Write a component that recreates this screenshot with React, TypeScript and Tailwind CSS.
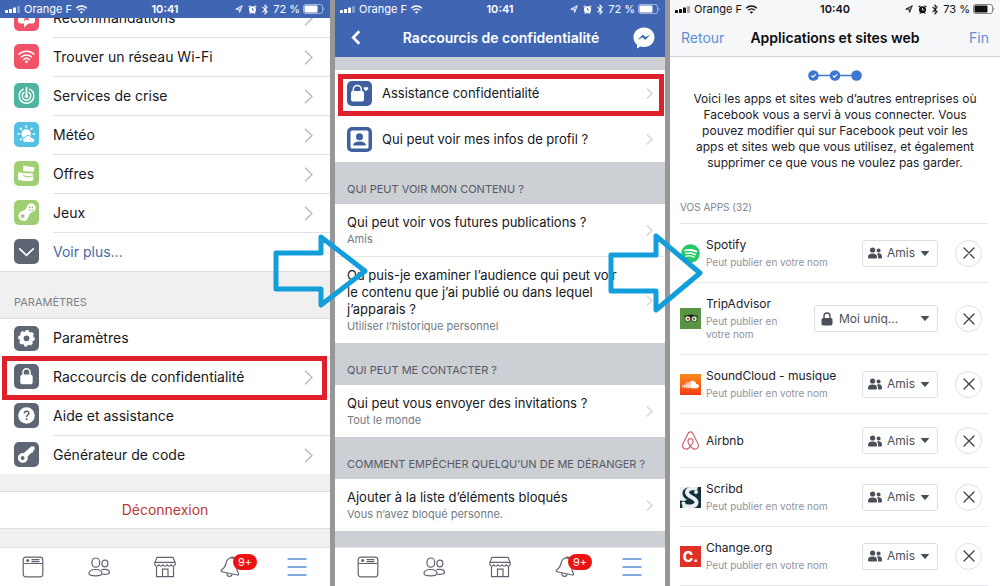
import type { ReactNode } from 'react';
import clsx from 'clsx';
import { FaAirbnb, FaBluetoothB, FaSoundcloud, FaSpotify } from 'react-icons/fa';

type MenuEntry = {
  label: string;
  color: string;
  icon: ReactNode;
  chevron?: boolean;
  link?: boolean;
  highlight?: boolean;
};

type AppEntry = {
  name: string;
  note?: string;
  logo: ReactNode;
  audience?: 'friends' | 'me';
};

/* ---------- Small drawings ---------- */

function Chevron({ small = false }: { small?: boolean }) {
  return (
    <svg
      viewBox="0 0 9 15"
      fill="none"
      stroke="currentColor"
      strokeWidth="1.4"
      className={clsx('shrink-0', small ? 'h-[11px] w-[7px] text-[#c4c6ca]' : 'h-[15px] w-[9px] text-[#b9bbc0]')}
    >
      <path d="M1 .8 8 7.5 1 14.2" />
    </svg>
  );
}

function WifiGlyph({ className }: { className: string }) {
  return (
    <svg viewBox="0 0 24 18" fill="none" stroke="currentColor" strokeWidth="3" className={className}>
      <path d="M1.5 6.5a15 15 0 0 1 21 0" />
      <path d="M5.5 10.6a9.4 9.4 0 0 1 13 0" />
      <path d="M12 17.5 8.8 14a4.6 4.6 0 0 1 6.4 0z" fill="currentColor" stroke="none" />
    </svg>
  );
}

function Arrow({ className, height }: { className: string; height: number }) {
  const mid = height / 2;
  return (
    <svg
      width="96"
      height={height}
      viewBox={`0 0 96 ${height}`}
      fill="none"
      stroke="#129ddb"
      strokeWidth="5"
      strokeLinejoin="round"
      className={clsx('pointer-events-none absolute z-20', className)}
    >
      <path d={`M3 ${mid - 18}H48V3L92 ${mid} 48 ${height - 3}V${mid + 18}H3Z`} />
    </svg>
  );
}

const Friends = ({ className }: { className: string }) => (
  <svg viewBox="0 0 14 12" fill="currentColor" className={className}>
    <circle cx="4.6" cy="3" r="2.6" />
    <circle cx="10.6" cy="3.4" r="2" />
    <path d="M0 10c0-2.500 1.700-3.600 4.600-3.600S9 7.500 9 10c0 1-.6 1.500-1.500 1.500h-6C.6 11.500 0 11 0 10z" />
    <path d="M10 11.500c.4-1.800 0-3.700-1-4.800.5-.3 1-.4 1.700-.4 2.200 0 3.300 1.300 3.300 3.600 0 1-.4 1.600-1.400 1.600z" />
  </svg>
);

const Lock = ({ className }: { className: string }) => (
  <svg viewBox="0 0 12 14" className={className}>
    <path d="M3 7V4a3 3 0 0 1 6 0v3" fill="none" stroke="currentColor" strokeWidth="1.4" />
    <rect x=".5" y="6" width="11" height="7.500" rx="1.800" fill="currentColor" />
  </svg>
);

/* ---------- Menu icons, drawn on a 25 x 25 tile ---------- */

const Tile = ({ children }: { children: ReactNode }) => (
  <svg viewBox="0 0 25 25" fill="#fff" className="size-[25px]">
    {children}
  </svg>
);

const starIcon = (
  <Tile>
    <path d="M4 8a3 3 0 0 1 3-3h11a3 3 0 0 1 3 3v6.500a3 3 0 0 1-3 3h-3.500L10 21.500v-4H7a3 3 0 0 1-3-3z" />
    <path d="m12.500 7.500 1.200 2.600 2.800.3-2.100 1.900.6 2.700-2.500-1.400-2.500 1.400.6-2.700-2.100-1.900 2.800-.3z" fill="#f25268" />
  </Tile>
);

const wifiIcon = (
  <Tile>
    <g fill="none" stroke="#fff" strokeWidth="1.500" strokeLinecap="round">
      <path d="M5 10.300a10.800 10.800 0 0 1 15 0" />
      <path d="M7.500 12.900a7.200 7.200 0 0 1 10 0" />
      <path d="M9.900 15.400a3.800 3.800 0 0 1 5.200 0" />
    </g>
    <circle cx="12.500" cy="17.800" r="1.300" />
  </Tile>
);

const crisisIcon = (
  <Tile>
    <g fill="none" stroke="#fff" strokeWidth="1.400" strokeLinecap="round">
      <path d="M9.300 6.200a7.400 7.400 0 1 0 6.400 0" />
      <path d="M10 9.400a4.300 4.300 0 1 0 5 0" />
      <path d="M12.500 4.800v7" strokeWidth="1.800" />
    </g>
    <circle cx="12.500" cy="13.200" r="1.800" />
  </Tile>
);

const weatherIcon = (
  <Tile>
    <circle cx="12.200" cy="12" r="4.800" />
    <g stroke="#fff" strokeWidth="1.700" strokeLinecap="round">
      <path d="M12.200 4v1M6.500 6.400l.7.700M4.200 12h1M6.500 17.700l.7-.7M17.900 6.400l-.7.700M20.300 12h-1M12.200 20v-.5" />
    </g>
    <path
      d="M11 20.500a2.500 2.500 0 0 1 0-5 3.600 3.600 0 0 1 6.700.4 2.400 2.400 0 0 1 1.300 4.600z"
      stroke="#54c0e2"
      strokeWidth="1"
    />
  </Tile>
);

const offersIcon = (
  <Tile>
    <path d="m9.500 4.500 11 2-.8 4.300-10.700-.6z" />
    <path d="M4 11.500h3.500l1 .8h8.800a2 2 0 0 1 2 2V18a2 2 0 0 1-2 2H8.500L7 19H4z" />
    <path d="M9 14.500c2 0 2.500 1.500 4.500 1.500s3-1.200 5.500-1" fill="none" stroke="#a0cf73" strokeWidth="1.100" />
  </Tile>
);

const gamesIcon = (
  <Tile>
    <path d="M14.500 4.600a4.300 4.300 0 0 1 6.200 5.900c-1 1.300-2.700 1.500-4 2.400-1.500 1-1.800 2.600-2.500 4.600A5 5 0 1 1 7 11.600c2-.8 3.600-1 4.800-2.600.9-1.300 1.400-3.200 2.700-4.400z" />
    <path d="m7 14.500 3.400 3.400M10.400 14.500 7 17.900" stroke="#8bbd5c" strokeWidth="1.100" />
    <g fill="#8bbd5c">
      <circle cx="15.700" cy="7.400" r=".8" />
      <circle cx="18.300" cy="7.400" r=".8" />
      <circle cx="15.700" cy="10" r=".8" />
      <circle cx="18.300" cy="10" r=".8" />
    </g>
  </Tile>
);

const moreIcon = (
  <Tile>
    <path d="m5.800 9.800 6.700 6.600 6.700-6.600" fill="none" stroke="#fff" strokeWidth="1.700" strokeLinecap="round" />
  </Tile>
);

const gearIcon = (
  <Tile>
    <circle cx="12.500" cy="12.300" r="5" fill="none" stroke="#fff" strokeWidth="4.200" />
    <circle
      cx="12.500"
      cy="12.300"
      r="7.300"
      fill="none"
      stroke="#fff"
      strokeWidth="2"
      strokeDasharray="3.300 2.433"
      strokeDashoffset="1"
    />
  </Tile>
);

const lockIcon = (
  <Tile>
    <path d="M9 11.500V8.300a3.500 3.500 0 0 1 7 0v3.200" fill="none" stroke="#fff" strokeWidth="1.500" />
    <rect x="6.300" y="10.500" width="12.400" height="9.800" rx="2.600" />
  </Tile>
);

const helpIcon = (
  <Tile>
    <circle cx="12.500" cy="12.500" r="8.300" />
    <path
      d="M10.300 10.400c.1-1.400 1-2.100 2.300-2.100 1.300 0 2.200.8 2.200 2 0 1.700-2.200 1.800-2.200 3.700"
      fill="none"
      stroke="#555c69"
      strokeWidth="1.500"
    />
    <circle cx="12.600" cy="16.300" r="1" fill="#555c69" />
  </Tile>
);

const keyIcon = (
  <Tile>
    <path d="M17.200 4.400h3.300v3.500l-1.300.9-.4 1.600-1.700.6-3.500 3.600a4.900 4.900 0 1 1-3.700-3.500z" strokeLinejoin="round" />
    <circle cx="8.600" cy="16" r="1.900" fill="#5f6673" />
  </Tile>
);

const privacyIcon = (
  <Tile>
    <path d="M6.300 11V8.400a4 4 0 0 1 8 0V11" fill="none" stroke="#fff" strokeWidth="1.500" />
    <rect x="4" y="10" width="13" height="10.500" rx="1.800" />
    <path d="m19 10.200-2.100-2.100c-1.100-1.300.9-2.900 2.100-1.400 1.200-1.500 3.200.1 2.100 1.400z" />
  </Tile>
);

const profileIcon = (
  <Tile>
    <rect x="3.500" y="3.500" width="18" height="18" rx="1.500" />
    <circle cx="12.500" cy="9.800" r="3.500" fill="#3f5f9e" />
    <path d="M6 18.500c.4-3 3-4 6.500-4s6.100 1 6.500 4z" fill="#3f5f9e" />
  </Tile>
);

/* ---------- Status and tab bars ---------- */

function StatusBar({ time, battery, level, dark = false }: { time: string; battery: string; level: number; dark?: boolean }) {
  return (
    <div
      className={clsx(
        'grid h-[18px] shrink-0 grid-cols-[1fr_auto_1fr] items-center px-[5px] text-[11px] leading-[18px]',
        dark ? 'bg-[#f6f7f9] text-[#111]' : 'bg-[#4066b3] text-white',
      )}
    >
      <div className="flex items-center">
        <svg viewBox="0 0 15 7" fill="currentColor" className="h-[7px] w-[15px]">
          <rect y="4" width="3" height="3" rx=".6" />
          <rect x="4" y="3" width="3" height="4" rx=".6" />
          <rect x="8" y="1.500" width="3" height="5.500" rx=".6" />
          <rect x="12" width="3" height="7" rx=".6" opacity=".35" />
        </svg>
        <span className="ml-1">Orange F</span>
        <WifiGlyph className="ml-[3px] h-[9px] w-[13px]" />
      </div>
      <span className="text-[11px] font-semibold">{time}</span>
      <div className="flex items-center justify-end">
        <svg viewBox="0 0 8 8" fill="none" stroke="currentColor" className="size-[8px]">
          <path d="M.8 4.200 7.300.7 4.600 7.400 4 4.200z" strokeWidth=".9" fill="currentColor" fillOpacity=".35" />
        </svg>
        <svg viewBox="0 0 10 10" className="ml-[5px] size-[9px]">
          <circle cx="5" cy="5.400" r="3.900" fill="currentColor" />
          <path d="M.8 2.400 2.600.9M9.200 2.400 7.400.9M2 9.500l.8-.8M8 9.500l-.8-.8" stroke="currentColor" strokeWidth="1.300" />
          <path d="M5 3.200v2.400h1.900" fill="none" stroke={dark ? '#f6f7f9' : '#4066b3'} />
        </svg>
        <FaBluetoothB className="ml-1 h-[11px] w-[8px]" />
        <span className="ml-1">{battery}</span>
        <svg viewBox="0 0 22 10" className="ml-[3px] h-[10px] w-[22px]">
          <rect x=".5" y=".5" width="19" height="9" rx="2" fill="none" stroke="currentColor" opacity=".5" />
          <rect x="1.500" y="1.500" width={level} height="7" rx="1" fill="currentColor" />
          <path d="M20.500 3.500c1.300.5 1.300 2.500 0 3z" fill="currentColor" opacity=".5" />
        </svg>
      </div>
    </div>
  );
}

function TabBar() {
  const tab = 'flex items-center justify-center';
  const glyph = 'size-[22px]';
  return (
    <nav className="mt-auto grid h-[39px] shrink-0 grid-cols-5 border-t border-[#e2e3e6] bg-white text-[#5f6470]">
      <button type="button" aria-label="Fil" className={tab}>
        <svg viewBox="0 0 22 22" fill="none" stroke="currentColor" strokeWidth="1.200" className={glyph}>
          <rect x="1.200" y="1.200" width="19.600" height="19.600" rx="2.500" />
          <path d="M1.200 7.500h19.600M9.500 3.600h8M9.500 5.600h8" />
          <circle cx="5.700" cy="4.600" r="1.500" fill="currentColor" stroke="none" />
        </svg>
      </button>
      <button type="button" aria-label="Amis" className={tab}>
        <svg viewBox="0 0 22 22" fill="none" stroke="currentColor" strokeWidth="1.200" className={glyph}>
          <rect x="4" y="2" width="7.600" height="9.200" rx="3.700" />
          <rect x="14" y="4.200" width="5.800" height="6.600" rx="2.800" />
          <path d="M1 17.500c0-2.800 2.800-4 6.700-4s6.300 1.200 6.300 4c0 1.700-2.400 2.300-6.500 2.300S1 19.200 1 17.500z" />
          <path d="M13.500 13.600c4.500-.9 8 .2 8 2.700 0 1.500-2.500 2.300-7 2" />
        </svg>
      </button>
      <button type="button" aria-label="Marketplace" className={tab}>
        <svg viewBox="0 0 22 22" fill="none" stroke="currentColor" strokeWidth="1.200" className={glyph}>
          <path d="M3 1.300h16l2.200 5.200v2.300c-1.200 1.900-2.900 1.900-4 0-1.200 1.900-2.900 1.900-4.100 0-1.200 1.900-3 1.900-4.200 0-1.200 1.900-2.900 1.900-4.100 0-1.100 1.900-2.800 1.900-4 0V6.500zM.8 6.300h20.400" />
          <path d="M2.500 10.500v10.200h17V10.500M8.500 20.500v-7.300h5.500v7.300" />
        </svg>
      </button>
      <button type="button" aria-label="Notifications" className={clsx(tab, 'relative')}>
        <svg viewBox="0 0 22 22" fill="none" stroke="currentColor" strokeWidth="1.200" className={glyph}>
          <g transform="rotate(12 11 11)">
            <path d="M11 2c-4 0-5.600 3-5.600 6.500 0 4-1.400 5.700-3 7.300-.6.700-.3 1.700.7 1.700h15.800c1 0 1.300-1 .7-1.700-1.600-1.600-3-3.300-3-7.300C16.600 5 15 2 11 2z" />
            <path d="M9 2.300c0-1.800 4-1.800 4 0M8.300 17.800c.3 3.600 5.100 3.600 5.400 0" />
          </g>
        </svg>
        <span className="absolute top-[6px] left-[35px] rounded-full bg-[#ee1111] px-[5px] text-[11px] leading-[16px] text-white">9+</span>
      </button>
      <button type="button" aria-label="Menu" className={tab}>
        <svg viewBox="0 0 22 22" stroke="#5b8fd6" strokeWidth="1.600" className={glyph}>
          <path d="M1.500 3h19M1.500 11h19M1.500 19h19" />
        </svg>
      </button>
    </nav>
  );
}

/* ---------- Panel 1: main menu ---------- */

const shortcuts: MenuEntry[] = [
  { label: 'Recommandations', color: 'bg-[#f25268]', icon: starIcon, chevron: true },
  { label: 'Trouver un réseau Wi-Fi', color: 'bg-[#f25268]', icon: wifiIcon, chevron: true },
  { label: 'Services de crise', color: 'bg-[#4fb5a0]', icon: crisisIcon, chevron: true },
  { label: 'Météo', color: 'bg-[#54c0e2]', icon: weatherIcon, chevron: true },
  { label: 'Offres', color: 'bg-[#a0cf73]', icon: offersIcon, chevron: true },
  { label: 'Jeux', color: 'bg-[#a0cf73]', icon: gamesIcon, chevron: true },
  { label: 'Voir plus...', color: 'bg-[#5f6673]', icon: moreIcon, link: true },
];

const settings: MenuEntry[] = [
  { label: 'Paramètres', color: 'bg-[#5f6673]', icon: gearIcon },
  { label: 'Raccourcis de confidentialité', color: 'bg-[#5f6673]', icon: lockIcon, chevron: true, highlight: true },
  { label: 'Aide et assistance', color: 'bg-[#5f6673]', icon: helpIcon },
  { label: 'Générateur de code', color: 'bg-[#5f6673]', icon: keyIcon, chevron: true },
];

function MenuList({ items, className }: { items: MenuEntry[]; className?: string }) {
  return (
    <ul className={clsx('bg-white', className)}>
      {items.map((item) => (
        <li key={item.label} className="group relative">
          <a href="#" className="flex items-center gap-[14px] pl-[14px]">
            <span className={clsx('shrink-0 overflow-hidden rounded-[5px]', item.color)}>{item.icon}</span>
            <span className="flex flex-1 items-center justify-between border-t border-[#dfe0e3] py-[10px] pr-[17px] group-first:border-t-0">
              <span className={clsx('text-[14px] leading-[18px]', item.link ? 'text-[#4a69a5]' : 'text-[#16181d]')}>
                {item.label}
              </span>
              {item.chevron && <Chevron />}
            </span>
          </a>
          {item.highlight && (
            <span className="pointer-events-none absolute -top-px right-[3px] -bottom-1 left-[2px] z-10 border-[5px] border-[#df1f29]" />
          )}
        </li>
      ))}
    </ul>
  );
}

function MenuPanel() {
  return (
    <section className="relative flex flex-col bg-[#f0f0f1]">
      <StatusBar time="10:41" battery="72 %" level={13} />
      {/* the list is scrolled: its first row is cut by the status bar */}
      <div className="overflow-hidden">
        <MenuList items={shortcuts} className="-mt-[19px]" />
      </div>
      <h2 className="border-y border-[#dcdde0] pt-[22px] pb-2 pl-[14px] text-[11px] leading-[16px] text-[#7d8088]">PARAMÈTRES</h2>
      <MenuList items={settings} />
      <div className="mt-[17px] border-y border-[#dcdde0] bg-white">
        <button type="button" className="w-full py-[9px] text-[14px] leading-[18px] text-[#b9373a]">
          Déconnexion
        </button>
      </div>
      <TabBar />
      <Arrow height={74} className="top-[234px] -right-[39px]" />
    </section>
  );
}

/* ---------- Panel 2: privacy shortcuts ---------- */

function GroupTitle({ children }: { children: ReactNode }) {
  return <h2 className="bg-[#cccfd4] pt-[19px] pb-[7px] pl-3 text-[11px] leading-[16px] text-[#555a63]">{children}</h2>;
}

function PrivacyRow({ title, note, divider = false }: { title: ReactNode; note: string; divider?: boolean }) {
  return (
    <a
      href="#"
      className={clsx('flex items-center justify-between bg-white pt-[10px] pr-3 pb-[9px] pl-3', divider && 'border-b border-[#e4e5e8]')}
    >
      <span>
        <span className="block text-[13px] leading-[17px] whitespace-nowrap text-[#16181d]">{title}</span>
        <span className="block text-[11px] leading-[16px] text-[#757982]">{note}</span>
      </span>
      <Chevron small />
    </a>
  );
}

function IconRow({ label, icon, highlight = false }: { label: string; icon: ReactNode; highlight?: boolean }) {
  return (
    <a href="#" className="relative flex h-[46px] items-center gap-[10px] bg-white px-3">
      <span className="overflow-hidden rounded-[5px] bg-[#3f5f9e]">{icon}</span>
      <span className="flex-1 text-[13px] leading-[17px] text-[#16181d]">{label}</span>
      <Chevron small />
      {highlight && (
        <span className="pointer-events-none absolute top-1 right-px bottom-0 left-[3px] z-10 border-[5px] border-[#df1f29]" />
      )}
    </a>
  );
}

function PrivacyPanel() {
  return (
    <section className="relative flex flex-col bg-[#cccfd4]">
      <StatusBar time="10:41" battery="72 %" level={13} />
      <header className="flex h-[39px] shrink-0 items-center justify-between bg-[#4066b3] pr-[10px] pl-4 text-white">
        <button type="button" aria-label="Retour">
          <svg viewBox="0 0 10 16" fill="none" stroke="currentColor" strokeWidth="2.800" className="h-[15px] w-[10px]">
            <path d="M8.500 1.300 2 8l6.500 6.700" />
          </svg>
        </button>
        <h1 className="pl-2 text-[14px] font-semibold">Raccourcis de confidentialité</h1>
        <button type="button" aria-label="Messenger">
          <svg viewBox="0 0 22 22" className="size-[22px]">
            <path d="M11 .5C5 .5.5 4.800.5 10.300c0 3 1.400 5.600 3.500 7.400v3.800l3.400-1.900c1.100.3 2.300.5 3.600.5 6 0 10.500-4.300 10.500-9.800S17 .5 11 .5z" fill="#fff" />
            <path d="m4.500 13 5.300-5.600 2.700 2.700 5-2.700-5.300 5.600-2.700-2.700z" fill="#4066b3" />
          </svg>
        </button>
      </header>
      <div className="pt-[13px]">
        <IconRow label="Assistance confidentialité" icon={privacyIcon} highlight />
        <IconRow label="Qui peut voir mes infos de profil ?" icon={profileIcon} />
      </div>
      <GroupTitle>QUI PEUT VOIR MON CONTENU ?</GroupTitle>
      <PrivacyRow title="Qui peut voir vos futures publications ?" note="Amis" divider />
      <PrivacyRow
        title={
          <>
            Où puis-je examiner l’audience qui peut voir
            <br />
            le contenu que j’ai publié ou dans lequel
            <br />
            j’apparais ?
          </>
        }
        note="Utiliser l’historique personnel"
      />
      <GroupTitle>QUI PEUT ME CONTACTER ?</GroupTitle>
      <PrivacyRow title="Qui peut vous envoyer des invitations ?" note="Tout le monde" />
      <GroupTitle>COMMENT EMPÊCHER QUELQU’UN DE ME DÉRANGER ?</GroupTitle>
      <PrivacyRow title="Ajouter à la liste d’éléments bloqués" note="Vous n’avez bloqué personne." />
      <TabBar />
      <Arrow height={80} className="top-[233px] -right-[39px]" />
    </section>
  );
}

/* ---------- Panel 3: apps and websites ---------- */

const apps: AppEntry[] = [
  {
    name: 'Spotify',
    note: 'Peut publier en votre nom',
    logo: <FaSpotify className="size-[19px] text-[#25c865]" />,
  },
  {
    name: 'TripAdvisor',
    note: 'Peut publier en votre nom',
    logo: (
      <span className="flex size-full items-center justify-center bg-[#589442]">
        <svg viewBox="0 0 14 9" className="h-[9px] w-[14px]">
          <path d="M0 1.500h3C5 0 9 0 11 1.500h3L12.500 4h-11z" fill="#1c2a17" />
          <circle cx="3.700" cy="4.800" r="2.900" fill="#f4f1e0" stroke="#1c2a17" strokeWidth=".8" />
          <circle cx="10.300" cy="4.800" r="2.900" fill="#f4f1e0" stroke="#1c2a17" strokeWidth=".8" />
          <circle cx="3.900" cy="4.800" r="1.100" fill="#a33" />
          <circle cx="10.100" cy="4.800" r="1.100" fill="#274" />
        </svg>
      </span>
    ),
    audience: 'me',
  },
  {
    name: 'SoundCloud - musique',
    note: 'Peut publier en votre nom',
    logo: (
      <span className="flex size-full items-center justify-center bg-linear-to-b from-[#fb8a1c] to-[#f43a14]">
        <FaSoundcloud className="size-[17px] text-white" />
      </span>
    ),
  },
  { name: 'Airbnb', logo: <FaAirbnb className="size-[21px] text-[#cf6472]" /> },
  {
    name: 'Scribd',
    note: 'Peut publier en votre nom',
    logo: (
      <svg viewBox="0 0 21 21" className="size-[21px]">
        <rect width="21" height="21" fill="#14303a" />
        <path d="M0 0h11C5 .5 2.500 3 2.500 6.500c0 3 2 4.700 4.500 6.200L4 14 0 13.500z" fill="#e9eef0" />
        <path d="M17.500 1.500C12 .3 7 2 7 5.500c0 4.500 9.500 5 9.500 9.700 0 4.500-7 5.300-14 3.300" fill="none" stroke="#e9eef0" strokeWidth="4" />
        <circle cx="16" cy="5" r="2" fill="#e9eef0" />
        <circle cx="3.500" cy="16.500" r="2" fill="#e9eef0" />
      </svg>
    ),
  },
  {
    name: 'Change.org',
    note: 'Peut publier en votre nom',
    logo: <span className="size-full bg-[#e03129] text-center text-[14px] leading-[21px] font-extrabold text-white">C.</span>,
  },
];

function AudienceSelect({ app, audience = 'friends' }: { app: string; audience?: 'friends' | 'me' }) {
  const onlyMe = audience === 'me';
  return (
    <label
      className={clsx(
        'flex h-[27px] shrink-0 items-center rounded-[3px] border border-[#dcdee2] bg-white pr-2 pl-[5px] text-[#4b4f58]',
        onlyMe ? 'w-[124px]' : 'w-[76px]',
      )}
    >
      {onlyMe ? <Lock className="mx-px h-[14px] w-[12px] shrink-0" /> : <Friends className="h-[12px] w-[14px] shrink-0" />}
      <select
        aria-label={`Audience de ${app}`}
        defaultValue={audience}
        className="ml-[5px] min-w-0 flex-1 appearance-none bg-transparent text-[12px] leading-[16px] outline-none"
      >
        <option value="friends">Amis</option>
        <option value="me">Moi uniq...</option>
      </select>
      <svg viewBox="0 0 8 5" fill="currentColor" className="h-[5px] w-[8px] shrink-0">
        <path d="M.5 0h7c.5 0 .6.400.3.700L4.600 4.500c-.3.300-.9.300-1.200 0L.2.700C-.1.400 0 0 .5 0z" />
      </svg>
    </label>
  );
}

function AppRow({ app }: { app: AppEntry }) {
  return (
    <li className="flex items-center border-b border-[#e6e7ea] py-[13px] pr-[6px]">
      <span className="flex size-[21px] shrink-0 items-center justify-center">{app.logo}</span>
      <div className="min-w-0 flex-1 pr-4 pl-[5px]">
        <h3 className="text-[12px] leading-[16px] whitespace-nowrap text-[#1d2129]">{app.name}</h3>
        {app.note && <p className="mt-[3px] text-[10px] leading-[13px] text-[#8f939c]">{app.note}</p>}
      </div>
      <AudienceSelect app={app.name} audience={app.audience} />
      <button
        type="button"
        aria-label={`Supprimer ${app.name}`}
        className="ml-[17px] flex size-[27px] shrink-0 items-center justify-center rounded-full border border-[#dcdee2] text-[#3c4048]"
      >
        <svg viewBox="0 0 12 12" stroke="currentColor" strokeWidth="1.300" strokeLinecap="round" className="size-[12px]">
          <path d="m1 1 10 10M11 1 1 11" />
        </svg>
      </button>
    </li>
  );
}

function AppsPanel() {
  return (
    <section className="bg-white">
      <StatusBar time="10:40" battery="73 %" level={13} dark />
      <header className="grid h-[39px] grid-cols-[1fr_auto_1fr] items-center border-b border-[#cfd2d8] bg-[#f6f7f9] px-[11px] text-[14px]">
        <a href="#" className="text-[#5c8fd6]">
          Retour
        </a>
        <h1 className="font-semibold text-[#0c0c0d]">Applications et sites web</h1>
        <a href="#" className="text-right text-[#5c8fd6]">
          Fin
        </a>
      </header>
      <svg viewBox="0 0 54 11" className="mx-auto mt-[13px] h-[11px] w-[54px]">
        <path d="M5 5.500h43" stroke="#3b76d2" strokeWidth="1.400" />
        <circle cx="5.500" cy="5.500" r="5.300" fill="#3b76d2" />
        <circle cx="27" cy="5.500" r="5.300" fill="#3b76d2" />
        <circle cx="48.500" cy="5.500" r="5.300" fill="#3b76d2" />
        <path d="m3.300 5.700 1.600 1.500 2.900-3M24.800 5.700l1.600 1.500 2.900-3" fill="none" stroke="#fff" strokeWidth="1.100" />
      </svg>
      <p className="mt-[10px] text-center text-[12px] leading-[16px] text-[#1d2129]">
        Voici les apps et sites web d’autres entreprises où
        <br />
        Facebook vous a servi à vous connecter. Vous
        <br />
        pouvez modifier qui sur Facebook peut voir les
        <br />
        apps et sites web que vous utilisez, et également
        <br />
        supprimer ce que vous ne voulez pas garder.
      </p>
      <div className="pr-3 pl-[10px]">
        <h2 className="border-b border-[#e6e7ea] pt-[28px] pb-2 text-[10px] leading-[16px] text-[#7f838c]">VOS APPS (32)</h2>
        <ul>
          {apps.map((app) => (
            <AppRow key={app.name} app={app} />
          ))}
        </ul>
      </div>
    </section>
  );
}

export default function App() {
  return (
    <main className="grid min-h-screen grid-cols-3 gap-[5px] bg-[#979797] font-['Inter','Liberation_Sans',sans-serif]">
      <MenuPanel />
      <PrivacyPanel />
      <AppsPanel />
    </main>
  );
}
